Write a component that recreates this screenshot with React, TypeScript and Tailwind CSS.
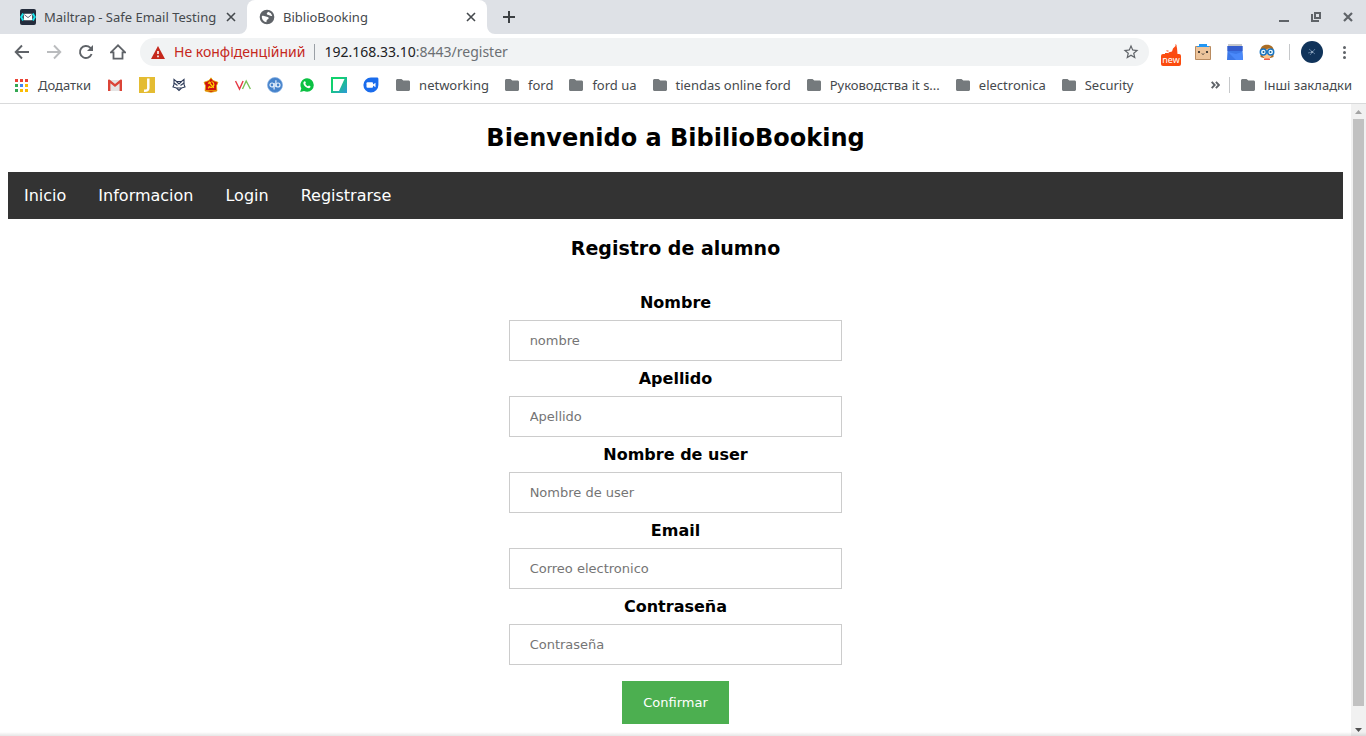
import type { ReactNode } from "react";

function MailtrapIcon() {
  return (
    <svg width="16" height="16" viewBox="0 0 16 16" aria-hidden="true">
      <rect width="16" height="16" rx="2" fill="#242c3c" />
      <path d="M3.2 4.500 1.200 8l2 3.500M12.800 4.500 14.800 8l-2 3.500" fill="none" stroke="#17e3ea" strokeWidth="2" />
      <rect x="3.800" y="4.800" width="8.400" height="6.400" rx="0.600" fill="#fff" />
      <path d="m4.300 5.600 3.700 3 3.700-3" fill="none" stroke="#39465a" strokeWidth="0.800" />
    </svg>
  );
}

function GlobeIcon() {
  return (
    <svg width="16" height="16" viewBox="0 0 24 24" fill="#5f6368" aria-hidden="true">
      <path d="M12 1a11 11 0 1 0 0 22 11 11 0 0 0 0-22ZM4.300 10.500c1.700-.7 3.200-.4 4.700.3 1.500.8 4 .6 5.200 1.900 1 1.200-.4 2.500-1.600 3-1.300.6-1.200 2.200-1.600 4.300A8.200 8.200 0 0 1 4.300 10.500Zm15.500-.4c-1.600.9-3.200 0-4.500-.7-1.500-.8-3.200-.6-3.600-2-.3-1.400 1.300-2 2.300-3.200a8.200 8.200 0 0 1 5.800 5.900Z" />
    </svg>
  );
}

function CloseIcon({ thin = false }: { thin?: boolean }) {
  return (
    <svg width="10" height="10" viewBox="0 0 10 10" aria-hidden="true">
      <path d="m1 1 8 8M9 1 1 9" stroke="currentColor" strokeWidth={thin ? 1.6 : 2.2} />
    </svg>
  );
}

function FolderIcon() {
  return (
    <svg width="14" height="12" viewBox="0 0 14 12" className="shrink-0" fill="#757a7d" aria-hidden="true">
      <path d="M1.500 0h4l1.800 1.600h5.200c.8 0 1.500.6 1.500 1.400v7.500c0 .8-.7 1.500-1.500 1.500h-11C.7 12 0 11.300 0 10.500v-9C0 .7.7 0 1.500 0Z" />
    </svg>
  );
}

function AppsIcon() {
  const colors = ["#ea4335", "#ea4335", "#ea4335", "#34a853", "#4285f4", "#fbbc05", "#34a853", "#fbbc05", "#fbbc05"];
  return (
    <svg width="13" height="13" viewBox="0 0 13 13" className="shrink-0" aria-hidden="true">
      {colors.map((c, i) => (
        <rect key={i} x={(i % 3) * 5} y={Math.floor(i / 3) * 5} width="3" height="3" fill={c} />
      ))}
    </svg>
  );
}

const siteIcons: { name: string; icon: ReactNode }[] = [
  {
    name: "Gmail",
    icon: (
      <>
        <path d="M2 3h12v11H2Z" fill="#e5e5e5" />
        <path d="M1 3.500C1 2.700 2 2.200 2.800 2.800L8 7l5.200-4.200c.8-.6 1.800-.1 1.800.7V14h-2.400V6.200L8 9.900 3.400 6.200V14H1Z" fill="#db4437" />
      </>
    ),
  },
  {
    name: "J",
    icon: (
      <>
        <rect width="16" height="16" fill="#e4bc32" />
        <path d="M9.300 1.500v9.500c0 2-1.200 2.900-4.300 2.700" fill="none" stroke="#fff" strokeWidth="2.500" />
      </>
    ),
  },
  {
    name: "Fox",
    icon: (
      <g fill="none" stroke="#2d3a58" strokeWidth="1.100">
        <path d="m3 2.500 2.500 2h5l2.500-2v5l1 2.500-3.500 1L8 13.500l-2.500-2.500L2 10l1-2.500Z" />
        <path d="m3 6 3.500 2.500M13 6 9.500 8.500M5.500 4.500 8 7l2.500-2.500M6 11h4" />
      </g>
    ),
  },
  {
    name: "Emblem",
    icon: (
      <>
        <path d="m8 .8 2 2.700 5 1.800-1.500 3.500.4 5.200-3.400.8-2.500.5-2.500-.5-3.400-.8.400-5.200L1 5.300l5-1.800Z" fill="#cf1110" stroke="#e2b400" strokeWidth="0.800" />
        <path d="M8.500 4.500c2.800.7 3.300 4.800.4 5.700-1.300.4-2.500-.3-3.100-1.200M5 6.700 6.700 5l1 1M6.600 6 10.800 10.800M5 11.200l1.300-1" fill="none" stroke="#ffd600" strokeWidth="1.200" />
        <path d="M3 13.500h10" stroke="#f1bd00" strokeWidth="0.700" />
      </>
    ),
  },
  {
    name: "VA",
    icon: (
      <g fill="none" strokeWidth="1.400">
        <path d="m.5 4 4 8 3.600-8" stroke="#e63946" />
        <path d="m7.500 12 3.700-8 4.200 8" stroke="#78c257" />
      </g>
    ),
  },
  {
    name: "qBittorrent",
    icon: (
      <>
        <circle cx="8" cy="8" r="7.500" fill="#4683cb" stroke="#82aee2" strokeWidth="0.700" />
        <g fill="none" stroke="#e5f0fc" strokeWidth="1.200">
          <circle cx="5" cy="8" r="2" />
          <circle cx="11" cy="8" r="2" />
          <path d="M7.100 6v6.500M8.900 3.300V10" />
        </g>
      </>
    ),
  },
  {
    name: "WhatsApp",
    icon: (
      <>
        <path d="M8 1.300A6.700 6.700 0 0 1 8.200 14.700 7 7 0 0 1 5 13.900L1.200 15l1.100-3.700A6.700 6.700 0 0 1 8 1.300Z" fill="#0bc143" />
        <path d="M5.300 4.400c.8-.5 1.200.2 1.600 1.400l-.6.900c.5 1.200 1.500 2.100 2.700 2.600l.9-.9c1.100.5 1.800.7 1.600 1.400-.4 1.400-1.700 1.700-2.800 1.300-2.200-.8-3.900-2.400-4.300-4.500-.1-1 .3-1.900.9-2.200Z" fill="#fff" />
      </>
    ),
  },
  {
    name: "Slides",
    icon: (
      <>
        <defs>
          <linearGradient id="teal" x1="0" y1="0" x2="1" y2="1">
            <stop offset="0.300" stopColor="#10d26d" />
            <stop offset="1" stopColor="#2f98d8" />
          </linearGradient>
        </defs>
        <rect width="16" height="16" fill="url(#teal)" />
        <path d="M2 2h11.500L8 14H2Z" fill="#fff" />
      </>
    ),
  },
  {
    name: "Duo",
    icon: (
      <>
        <path d="M8 .5h6c.8 0 1.400.6 1.400 1.400V8A7.500 7.500 0 1 1 8 .5Z" fill="#1a6cec" />
        <rect x="3.500" y="5.300" width="6.500" height="5.400" rx="1" fill="#fff" />
        <path d="m10 7.500 2.500-1.700v4.400L10 8.500Z" fill="#fff" />
      </>
    ),
  },
];

const folders = ["networking", "ford", "ford ua", "tiendas online ford", "Руководства it s...", "electronica", "Security"];

function TabStrip() {
  return (
    <header className="flex h-[34px] items-stretch bg-[#dee1e6] text-[13px] leading-5 text-[#45494d]">
      <div className="flex w-[247px] items-center pr-[11px] pl-5">
        <MailtrapIcon />
        <span className="ml-2 flex-1 whitespace-nowrap">Mailtrap - Safe Email Testing</span>
        <button aria-label="Close Mailtrap tab">
          <CloseIcon thin />
        </button>
      </div>
      <div className="relative flex w-60 items-center rounded-t-lg bg-white pr-[11px] pl-3">
        <svg className="absolute bottom-0 -left-2" width="8" height="8" aria-hidden="true">
          <path d="M8 0v8H0a8 8 0 0 0 8-8Z" fill="#fff" />
        </svg>
        <svg className="absolute -right-2 bottom-0" width="8" height="8" aria-hidden="true">
          <path d="M0 0v8h8a8 8 0 0 1-8-8Z" fill="#fff" />
        </svg>
        <GlobeIcon />
        <span className="ml-2 flex-1 whitespace-nowrap">BiblioBooking</span>
        <button aria-label="Close BiblioBooking tab">
          <CloseIcon thin />
        </button>
      </div>
      <button aria-label="New tab" className="ml-4 flex items-center">
        <svg width="12" height="12" viewBox="0 0 12 12" aria-hidden="true">
          <path d="M6 0v12M0 6h12" stroke="#3c4043" strokeWidth="2" />
        </svg>
      </button>
      <div className="ml-auto flex items-center gap-[22px] pr-[13px] text-[#5f6368]">
        <button aria-label="Minimize">
          <svg width="10" height="10" aria-hidden="true">
            <path d="M0 9h10" stroke="currentColor" strokeWidth="2" />
          </svg>
        </button>
        <button aria-label="Restore">
          <svg width="10" height="10" aria-hidden="true">
            <path d="M4 1h5v5H4ZM1 2v7h7" fill="none" stroke="currentColor" strokeWidth="2" />
          </svg>
        </button>
        <button aria-label="Close window">
          <CloseIcon />
        </button>
      </div>
    </header>
  );
}

function Toolbar() {
  return (
    <div className="flex h-9 items-center pr-[14px] pl-3.5 text-[#5f6368]">
      <div className="flex items-center gap-4">
        <button aria-label="Back">
          <svg width="16" height="16" viewBox="0 0 16 16" fill="none" stroke="#5f6368" strokeWidth="1.900" aria-hidden="true">
            <path d="M15 8H2.500M8 1.500 1.700 8 8 14.500" />
          </svg>
        </button>
        <button aria-label="Forward">
          <svg width="16" height="16" viewBox="0 0 16 16" fill="none" stroke="#babcbe" strokeWidth="1.900" aria-hidden="true">
            <path d="M1 8h12.500M8 1.500 14.300 8 8 14.500" />
          </svg>
        </button>
        <button aria-label="Reload">
          <svg width="16" height="16" viewBox="0 0 16 16" aria-hidden="true">
            <path d="M13.600 10A6 6 0 1 1 12.200 3.700L13.500 5" fill="none" stroke="#5f6368" strokeWidth="1.900" />
            <path d="M15 1v6H9Z" fill="#5f6368" />
          </svg>
        </button>
        <button aria-label="Home">
          <svg width="16" height="16" viewBox="0 0 16 16" aria-hidden="true">
            <path d="M.9 8.400 8 1.300l7.100 7.100h-2.600v6.300H3.500V8.400Z" fill="none" stroke="#5f6368" strokeWidth="1.800" />
          </svg>
        </button>
      </div>
      <div className="ml-3.5 flex h-7 flex-1 items-center rounded-full bg-[#f1f3f4] pr-[9px] pl-[11px] text-sm">
        <svg width="14" height="13" viewBox="0 0 14 13" aria-hidden="true">
          <path d="M7 0l7 13H0Z" fill="#c5281c" />
          <path d="M7 5v3M7 9.500v1.700" stroke="#fff" strokeWidth="1.600" />
        </svg>
        <span className="ml-[9px] whitespace-nowrap text-[#c5281c]">Не конфіденційний</span>
        <span className="mx-[9px] h-4 w-px bg-[#9aa0a6]" />
        <span className="flex-1 whitespace-nowrap">
          <span className="text-[#202124]">192.168.33.10</span>
          <span className="text-[#6b6f73]">:8443/register</span>
        </span>
        <button aria-label="Bookmark this page">
          <svg width="18" height="18" viewBox="0 0 24 24" fill="#5f6368" aria-hidden="true">
            <path d="m22 9.240-7.190-.62L12 2 9.190 8.630 2 9.240l5.460 4.730L5.820 21 12 17.270 18.180 21l-1.630-7.030L22 9.240ZM12 15.400l-3.760 2.270 1-4.280-3.320-2.880 4.380-.38L12 6.100l1.710 4.040 4.380.38-3.320 2.880 1 4.280L12 15.400Z" />
          </svg>
        </button>
      </div>
      <div className="ml-3 flex items-center gap-[14px]">
        <button aria-label="New extension" className="flex w-5 flex-col items-center pt-[5px]">
          <svg width="16" height="10" viewBox="0 0 16 10" aria-hidden="true">
            <path d="M12.500 0c1.700.8.7 2 1.500 4l.5 6H4.500L6 8.300l3-.7 1-3L12.500 2ZM3 6.500h2.500v1H4ZM2 9h3v1H2Z" fill="#fb4b14" />
          </svg>
          <span className="flex h-3 w-5 items-center justify-center rounded-xs bg-[#fb4b0e] text-[9px] leading-3 text-white">new</span>
        </button>
        <button aria-label="Box extension">
          <svg width="16" height="16" viewBox="0 0 16 16" aria-hidden="true">
            <path d="M.5 2.500h15v13H.5Z" fill="#edc49b" stroke="#b98b60" />
            <path d="M4 0h8v2h2v1H2V2h2Z" fill="#2196f3" />
            <circle cx="4" cy="8" r="1.100" fill="#222" />
            <circle cx="12" cy="8" r="1.100" fill="#222" />
            <path d="m7 9.500 1 1 1-1" fill="none" stroke="#222" />
          </svg>
        </button>
        <button aria-label="Notebook extension" className="ml-0.5">
          <svg width="16" height="16" viewBox="0 0 16 16" aria-hidden="true">
            <path d="M1 0h14v2H1Z" fill="#c7c9cb" />
            <path d="M.5 2h15v5l.5 9H0l.5-9Z" fill="#3c78e8" />
            <path d="M.5 2h15v5H.5Z" fill="#355dcd" />
            <path d="m1 8 8 2 6-2 1 8H9Z" fill="#4a89fa" />
          </svg>
        </button>
        <button aria-label="Reader extension" className="ml-0.5">
          <svg width="16" height="16" viewBox="0 0 16 16" aria-hidden="true">
            <path d="M1.500 13V6c0-7 13-7 13 0v7l-3 1h-7Z" fill="#ab6d24" />
            <path d="M3 6.500 11 4l2 3v4l-3 4H6l-3-4Z" fill="#ffc48b" />
            <path d="M5 14.500h6v1.500H5Z" fill="#ed5b4b" />
            <circle cx="4.300" cy="8" r="3" fill="#eefaff" stroke="#1976c5" strokeWidth="1.500" />
            <circle cx="11.700" cy="8" r="3" fill="#eefaff" stroke="#1976c5" strokeWidth="1.500" />
            <circle cx="4.500" cy="8" r="1" fill="#155b91" />
            <circle cx="11.500" cy="8" r="1" fill="#155b91" />
          </svg>
        </button>
        <span className="h-4 w-px bg-[#c6c8ca]" />
      </div>
      <button aria-label="Profile" className="ml-[11px]">
        <svg width="22" height="22" viewBox="0 0 22 22" aria-hidden="true">
          <circle cx="11" cy="11" r="11" fill="#10335a" />
          <path d="m8 8 6 5M14 8l-5 6M7 12l4-1" stroke="#6d8cab" strokeWidth="0.800" />
          <circle cx="11" cy="11" r="1" fill="#a1b5c8" />
        </svg>
      </button>
      <button aria-label="Menu" className="ml-[13px] flex w-4 justify-center">
        <svg width="3" height="13" viewBox="0 0 3 13" fill="#5f6368" aria-hidden="true">
          <circle cx="1.500" cy="1.500" r="1.500" />
          <circle cx="1.500" cy="6.500" r="1.500" />
          <circle cx="1.500" cy="11.500" r="1.500" />
        </svg>
      </button>
    </div>
  );
}

function BookmarksBar() {
  return (
    <nav aria-label="Bookmarks" className="flex h-[34px] items-center border-b border-[#d9dadb] pb-[3px] pr-3.5 pl-[15px] text-[13px] leading-5 text-[#45494d]">
      <a href="#apps" className="flex items-center gap-2.5 whitespace-nowrap">
        <AppsIcon />
        Додатки
      </a>
      <div className="ml-4 flex items-center gap-4">
        {siteIcons.map((s) => (
          <a key={s.name} href="#site" aria-label={s.name}>
            <svg width="16" height="16" viewBox="0 0 16 16" aria-hidden="true">
              {s.icon}
            </svg>
          </a>
        ))}
      </div>
      <div className="ml-[17px] flex gap-4">
        {folders.map((f) => (
          <a key={f} href="#folder" className="flex items-center gap-[9px] whitespace-nowrap">
            <FolderIcon />
            {f}
          </a>
        ))}
      </div>
      <button aria-label="More bookmarks" className="ml-auto">
        <svg width="9" height="8" viewBox="0 0 9 8" fill="none" stroke="#5f6368" strokeWidth="1.900" aria-hidden="true">
          <path d="m.7.8 3 3.200-3 3.200M4.900.8l3 3.200-3 3.200" />
        </svg>
      </button>
      <span className="ml-[9px] h-4 w-px bg-[#c6c8ca]" />
      <a href="#other" className="ml-[11px] flex items-center gap-[9px] whitespace-nowrap">
        <FolderIcon />
        Інші закладки
      </a>
    </nav>
  );
}

const links = ["Inicio", "Informacion", "Login", "Registrarse"];

const fields = [
  { id: "nombre", label: "Nombre", placeholder: "nombre", type: "text" },
  { id: "apellido", label: "Apellido", placeholder: "Apellido", type: "text" },
  { id: "user", label: "Nombre de user", placeholder: "Nombre de user", type: "text" },
  { id: "email", label: "Email", placeholder: "Correo electronico", type: "email" },
  { id: "password", label: "Contraseña", placeholder: "Contraseña", type: "password" },
];

function RegisterPage() {
  return (
    <main className="flex-1 px-2 pt-5 font-['DejaVu_Sans',sans-serif] text-black">
      <h1 className="text-center text-2xl leading-7 font-bold">Bienvenido a BibilioBooking</h1>
      <nav className="mt-5 flex bg-[#333]">
        {links.map((l) => (
          <a key={l} href={"#" + l} className="px-4 py-3.5 text-base leading-[19px] text-white">
            {l}
          </a>
        ))}
      </nav>
      <h2 className="mt-[18px] text-center text-[19px] leading-[22px] font-bold">Registro de alumno</h2>
      <form className="mt-[34px] flex flex-col items-center" onSubmit={(e) => e.preventDefault()}>
        {fields.map((f) => (
          <div key={f.id} className="mb-2 flex w-full flex-col items-center gap-2">
            <label htmlFor={f.id} className="text-base leading-[19px] font-bold">
              {f.label}
            </label>
            <input
              id={f.id}
              type={f.type}
              placeholder={f.placeholder}
              className="h-[41px] w-1/4 border border-[#ccc] px-5 text-[13px] placeholder:text-[#757575]"
            />
          </div>
        ))}
        <button type="submit" className="mt-2 h-[43px] bg-[#4caf50] px-[21px] text-[13px] text-white">
          Confirmar
        </button>
      </form>
    </main>
  );
}

function Scrollbar() {
  return (
    <div className="flex w-[15px] shrink-0 flex-col items-center bg-[#f1f1f1]" aria-hidden="true">
      <div className="flex h-[15px] items-center">
        <svg width="7" height="4" viewBox="0 0 7 4">
          <path d="M3.500 0 7 4H0Z" fill="#a3a3a3" />
        </svg>
      </div>
      <div className="w-[11px] flex-1 bg-[#c1c1c1]" />
      <div className="flex h-[30px] items-end pb-1">
        <svg width="7" height="4" viewBox="0 0 7 4">
          <path d="M0 0h7L3.500 4Z" fill="#505050" />
        </svg>
      </div>
    </div>
  );
}

export default function App() {
  return (
    <div className="relative flex min-h-screen flex-col bg-white font-['Noto_Sans',sans-serif]">
      <TabStrip />
      <Toolbar />
      <BookmarksBar />
      <div className="flex flex-1">
        <RegisterPage />
        <Scrollbar />
      </div>
      <div className="pointer-events-none absolute inset-x-0 bottom-0 h-1 bg-linear-to-t from-black/10 to-transparent" />
    </div>
  );
}
